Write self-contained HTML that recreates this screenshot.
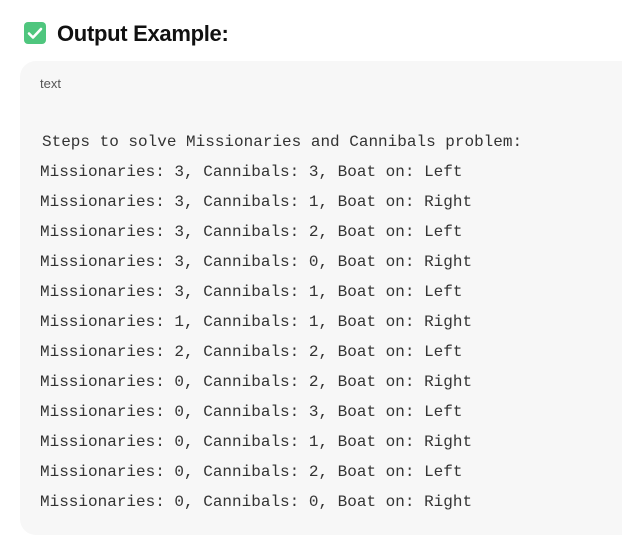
<!DOCTYPE html>
<html><head><style>
body{margin:0;background:#fff;width:622px;height:540px;overflow:hidden;font-family:"Liberation Sans",sans-serif;position:relative}
.h{position:absolute;left:57px;top:21px;font-size:22px;font-weight:bold;color:#111;letter-spacing:-0.3px}
.chk{position:absolute;left:24px;top:22px;width:22px;height:22px;border-radius:4px;background:#4fc67e}
.box{position:absolute;left:20px;top:61px;width:640px;height:474px;background:#f7f7f7;border-radius:16px}
.lbl{position:absolute;left:40px;top:76px;font-size:13px;color:#555}
pre{position:absolute;left:40px;top:127px;margin:0;font-family:"Liberation Mono",monospace;font-size:16px;line-height:30px;color:#333}
</style></head><body>
<div class="chk"><svg width="22" height="22" viewBox="0 0 22 22"><path d="M5 11.5l4 4 8-8.5" fill="none" stroke="#fff" stroke-width="2.6" stroke-linecap="round" stroke-linejoin="round"/></svg></div>
<div class="h">Output Example:</div>
<div class="box"></div>
<div class="lbl">text</div>
<pre><span style="margin-left:2px">Steps to solve Missionaries and Cannibals problem:</span>
Missionaries: 3, Cannibals: 3, Boat on: Left
Missionaries: 3, Cannibals: 1, Boat on: Right
Missionaries: 3, Cannibals: 2, Boat on: Left
Missionaries: 3, Cannibals: 0, Boat on: Right
Missionaries: 3, Cannibals: 1, Boat on: Left
Missionaries: 1, Cannibals: 1, Boat on: Right
Missionaries: 2, Cannibals: 2, Boat on: Left
Missionaries: 0, Cannibals: 2, Boat on: Right
Missionaries: 0, Cannibals: 3, Boat on: Left
Missionaries: 0, Cannibals: 1, Boat on: Right
Missionaries: 0, Cannibals: 2, Boat on: Left
Missionaries: 0, Cannibals: 0, Boat on: Right</pre>
</body></html>
